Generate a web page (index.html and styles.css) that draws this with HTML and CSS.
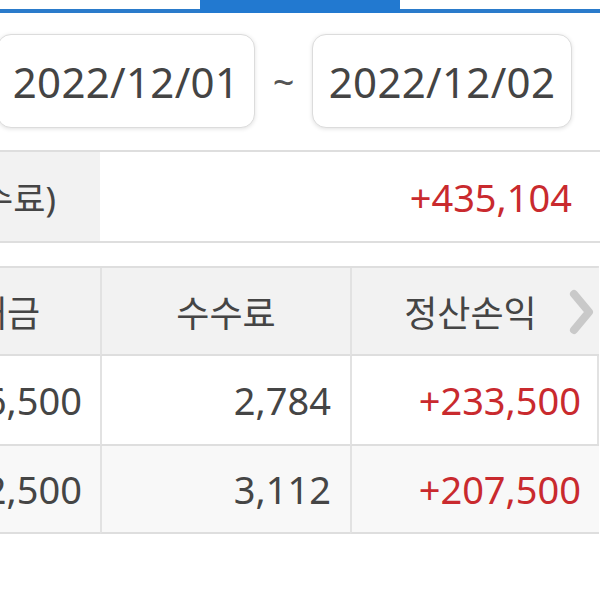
FILE: index.html
```html
<!DOCTYPE html>
<html lang="ko">
<head>
<meta charset="utf-8">
<link rel="stylesheet" href="styles.css">
</head>
<body>
<div class="page">
  <div class="tabs">
    <div class="tab"></div>
    <div class="tab active"></div>
    <div class="tab"></div>
  </div>

  <div class="dates">
    <div class="datebox first">2022/12/01</div>
    <div class="tilde">~</div>
    <div class="datebox">2022/12/02</div>
  </div>

  <div class="summary">
    <div class="sum-label"><span>정산손익(세금+수수료)</span></div>
    <div class="sum-value red">+435,104</div>
  </div>

  <div class="grid">
    <div class="cell head c1"><span>거래대금</span></div>
    <div class="cell head c2">수수료</div>
    <div class="cell head c3">정산손익
      <svg class="chev" width="30" height="50" viewBox="0 0 30 50"><polyline points="6,6 21,24 6,42" fill="none" stroke="#c9c9c9" stroke-width="8" stroke-linecap="round" stroke-linejoin="round"/></svg>
    </div>

    <div class="cell c1 num"><span>3,136,500</span></div>
    <div class="cell c2 num">2,784</div>
    <div class="cell c3 num red">+233,500</div>

    <div class="cell c1 num alt"><span>3,112,500</span></div>
    <div class="cell c2 num alt">3,112</div>
    <div class="cell c3 num red alt">+207,500</div>
  </div>
</div>
</body>
</html>
```

FILE: styles.css
```css
* { box-sizing: border-box; }
html, body { margin: 0; padding: 0; background: #fff; }
body {
  width: 600px;
  height: 600px;
  overflow: hidden;
  font-family: "Noto Sans", "Noto Sans CJK KR", sans-serif;
  color: #454545;
}
.page { width: 600px; }

.tabs {
  display: flex;
  align-items: flex-end;
  height: 13px;
}
.tab {
  flex: 0 0 200px;
  height: 4px;
  background: #2a7bcb;
}
.tab.active {
  height: 13px;
  background: #2279d0;
}

.dates {
  display: flex;
  align-items: center;
  margin-top: 21px;
  height: 94px;
}
.datebox {
  width: 260px;
  height: 94px;
  border: 1.5px solid #dcdcdc;
  border-radius: 14px;
  box-shadow: 0 1px 4px rgba(0,0,0,0.12);
  display: flex;
  align-items: center;
  justify-content: center;
  font-size: 42px;
  letter-spacing: 0.3px;
  color: #444;
  background: #fff;
}
.datebox.first {
  margin-left: -3px;
  width: 258px;
}
.tilde {
  width: 57px;
  text-align: center;
  font-size: 38px;
  color: #555;
  padding-bottom: 0;
}

.summary {
  margin-top: 22px;
  display: flex;
  height: 93px;
  border-top: 2px solid #dedede;
  border-bottom: 2px solid #dedede;
}
.sum-label {
  flex: 0 0 100px;
  background: #f2f2f2;
  overflow: hidden;
  display: flex;
  align-items: center;
  justify-content: flex-end;
  white-space: nowrap;
  padding-right: 44px;
  font-size: 35px;
}
.sum-label span { flex-shrink: 0; }
.sum-value {
  flex: 1;
  display: flex;
  align-items: center;
  justify-content: flex-end;
  padding-right: 28px;
  font-size: 38px;
}
.red { color: #c92a2e; }

.grid {
  margin-top: 23px;
  width: 599px;
  display: grid;
  grid-template-columns: 100px 250px 249px;
  grid-template-rows: 88px 90px 88px;
  border-top: 2px solid #dedede;
  border-right: 2px solid #e2e2e2;
}
.cell {
  display: flex;
  align-items: center;
  border-bottom: 2px solid #dedede;
  border-left: 2px solid #e2e2e2;
  white-space: nowrap;
  overflow: hidden;
}
.cell.c1 { border-left: none; justify-content: flex-end; }
.cell.c1 span { flex-shrink: 0; }
.head {
  background: #f2f2f2;
  font-size: 36px;
  justify-content: center;
  position: relative;
}
.head.c1 { padding-right: 60px; }
.head.c3 { padding-right: 10px; }
.chev {
  position: absolute;
  right: 1px;
  top: 20px;
}
.num {
  font-size: 38px;
  justify-content: flex-end;
  padding-right: 19px;
}
.num.c1 { padding-right: 18px; }
.num.c3 { padding-right: 18px; }
.alt { background: #f8f8f8; }
```
